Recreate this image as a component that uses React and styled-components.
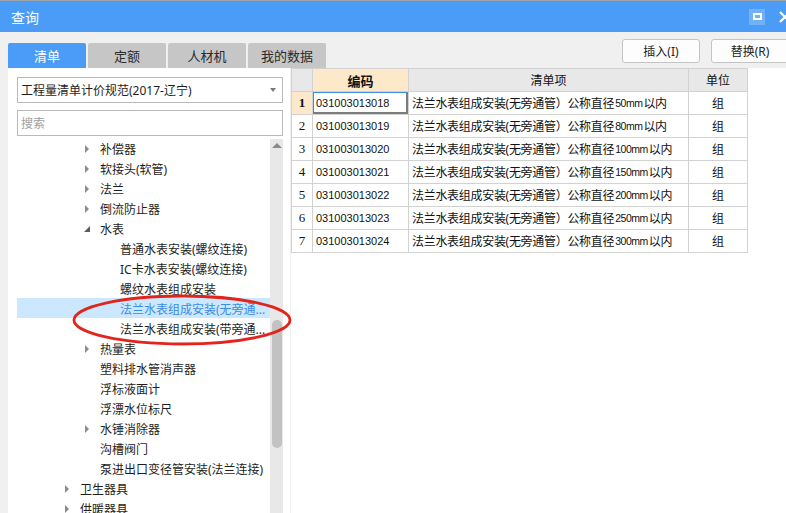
import React from 'react';
import styled, { createGlobalStyle } from 'styled-components';

const GlobalStyle = createGlobalStyle`
    html, body {
        margin: 0;
        padding: 0;
        background: #f0f0f0;
        overflow: hidden;
    }
    body {
        font-family: "Noto Sans", "Noto Sans CJK SC", sans-serif;
        color: #1e1e1e;
    }
`

const Window = styled.div`
    position: relative;
    width: 786px;
    height: 513px;
    display: flex;
    flex-direction: column;
    background: #f0f0f0;
    overflow: hidden;
`

const TitleBar = styled.div`
    flex: none;
    height: 32px;
    box-sizing: border-box;
    border-top: 1px solid #9ba3ab;
    background: #4a9cf7;
    display: flex;
    align-items: center;
    padding-left: 11px;
    color: #fff;
    font-size: 14px;
`

const WinControls = styled.div`
    margin-left: auto;
    margin-right: -6px;
    display: flex;
    align-items: center;
    gap: 13px;
`

const MaxButton = styled.div`
    width: 16px;
    height: 16px;
    background: rgba(255, 255, 255, 0.22);
    display: flex;
    align-items: center;
    justify-content: center;

    & > span {
        width: 9px;
        height: 7px;
        box-sizing: border-box;
        border: 2px solid #fff;
    }
`

const Toolbar = styled.div`
    flex: none;
    height: 36px;
    display: flex;
    align-items: flex-end;
    padding-left: 8px;
`

const Tabs = styled.div`
    display: flex;
    gap: 2px;
`

const Tab = styled.div`
    width: 78px;
    height: 25px;
    border-radius: 2px 2px 0 0;
    background: ${p => (p.$active ? '#4a9cf7' : '#c6c6c6')};
    color: ${p => (p.$active ? '#fff' : '#2a2a2a')};
    font-size: 13px;
    display: flex;
    align-items: center;
    justify-content: center;
`

const Actions = styled.div`
    margin-left: auto;
    margin-right: -3px;
    align-self: flex-start;
    margin-top: 7px;
    display: flex;
    gap: 11px;
`

const Button = styled.div`
    width: 78px;
    height: 24px;
    box-sizing: border-box;
    border: 1px solid #c4c4c4;
    border-radius: 3px;
    background: #fdfdfd;
    font-size: 12px;
    color: #222;
    display: flex;
    align-items: center;
    justify-content: center;
`

const Main = styled.div`
    flex: 1;
    min-height: 0;
    display: flex;
    gap: 1px;
    padding-left: 8px;
`

const LeftPanel = styled.div`
    width: 282px;
    flex: none;
    box-sizing: border-box;
    background: #fff;
    padding: 9px 7px 0 9px;
    display: flex;
    flex-direction: column;
`

const Field = styled.div`
    height: 26px;
    flex: none;
    box-sizing: border-box;
    border: 1px solid #b9b9b9;
    background: #fff;
    display: flex;
    align-items: center;
    padding: 0 3px 0 3px;
    font-size: 12px;
    color: ${p => (p.$placeholder ? '#a0a0a0' : '#1e1e1e')};
    margin-top: ${p => p.$gap || 0}px;
`

const Caret = styled.span`
    margin-left: auto;
    margin-right: 3px;
    width: 0;
    height: 0;
    border-left: 3px solid transparent;
    border-right: 3px solid transparent;
    border-top: 4px solid #7a7a7a;
`

const TreeWrap = styled.div`
    flex: 1;
    min-height: 0;
    margin-top: 2px;
    display: flex;
    overflow: hidden;
`

const TreeList = styled.div`
    flex: 1;
    min-width: 0;
`

const TreeRow = styled.div`
    height: 20px;
    display: flex;
    align-items: center;
    padding-left: ${p => 47 + (p.$level - 2) * 20}px;
    padding-top: 1px;
    box-sizing: border-box;
    background: ${p => (p.$selected ? '#cce8ff' : 'transparent')};
    color: ${p => (p.$selected ? '#3b8ce6' : '#1e1e1e')};
    font-size: 12px;
    white-space: nowrap;
`

const Toggle = styled.span`
    width: 16px;
    flex: none;
    display: flex;
    align-items: center;
`

const Closed = styled.span`
    width: 0;
    height: 0;
    margin-left: 1px;
    border-top: 4px solid transparent;
    border-bottom: 4px solid transparent;
    border-left: 4px solid #8c8c8c;
`

const Opened = styled.span`
    width: 0;
    height: 0;
    border-left: 6px solid transparent;
    border-bottom: 6px solid #5c5c5c;
`

const Scrollbar = styled.div`
    width: 13px;
    flex: none;
    margin-top: 1px;
    background: #e8e8e8;
    display: flex;
    flex-direction: column;
    align-items: center;
`

const ScrollUp = styled.div`
    height: 9px;
    display: flex;
    align-items: flex-end;

    & > span {
        width: 0;
        height: 0;
        border-left: 5px solid transparent;
        border-right: 5px solid transparent;
        border-bottom: 5px solid #8a8a8a;
    }
`

const Thumb = styled.div`
    width: 10px;
    height: 128px;
    margin-top: 172px;
    border-radius: 5px;
    background: #c2c2c2;
`

const RightPanel = styled.div`
    flex: 1;
    background: #fff;
`

const Grid = styled.div`
    display: grid;
    grid-template-columns: 21px 96px 280px 59px;
    grid-auto-rows: 23px;
    width: max-content;
    border-left: 1px solid #d2d2d2;
    border-top: 1px solid #d2d2d2;
`

const Cell = styled.div`
    box-sizing: border-box;
    border-right: 1px solid #d2d2d2;
    border-bottom: 1px solid #d2d2d2;
    display: flex;
    align-items: center;
    justify-content: ${p => (p.$center ? 'center' : 'flex-start')};
    padding-left: ${p => (p.$center ? 0 : 3)}px;
    background: ${p => (p.$peach ? '#fde8c9' : p.$head ? '#e8e8e8' : '#fff')};
    font-weight: ${p => (p.$bold ? 'bold' : 'normal')};
    font-size: ${p => (p.$bold ? 13 : 12)}px;
    color: #111;
    white-space: nowrap;
    overflow: hidden;
    box-shadow: ${p => (p.$focus ? 'inset 1px 1px 0 #3b8cf0, inset -2px -2px 0 #7c7c7c' : 'none')};
`

const ItemCell = styled(Cell)`
    letter-spacing: -0.3px;
`

const RowNo = styled(Cell)`
    font-family: "Liberation Serif", serif;
    font-size: 13px;
`

const Code = styled(Cell)`
    font-family: "Liberation Sans", sans-serif;
    font-size: 11px;
`

const Size = styled.span`
    font-family: "Liberation Sans", sans-serif;
    font-size: 10.5px;
    letter-spacing: -0.5px;
    margin: 0 1px;
`

const Annotation = styled.svg`
    position: absolute;
    left: 72px;
    top: 294px;
    pointer-events: none;
`

const tree = [
    { level: 3, label: '补偿器', toggle: 'closed' },
    { level: 3, label: '软接头(软管)', toggle: 'closed' },
    { level: 3, label: '法兰', toggle: 'closed' },
    { level: 3, label: '倒流防止器', toggle: 'closed' },
    { level: 3, label: '水表', toggle: 'open' },
    { level: 4, label: '普通水表安装(螺纹连接)' },
    { level: 4, label: 'IC卡水表安装(螺纹连接)' },
    { level: 4, label: '螺纹水表组成安装' },
    { level: 4, label: '法兰水表组成安装(无旁通...', selected: true },
    { level: 4, label: '法兰水表组成安装(带旁通...' },
    { level: 3, label: '热量表', toggle: 'closed' },
    { level: 3, label: '塑料排水管消声器' },
    { level: 3, label: '浮标液面计' },
    { level: 3, label: '浮漂水位标尺' },
    { level: 3, label: '水锤消除器', toggle: 'closed' },
    { level: 3, label: '沟槽阀门' },
    { level: 3, label: '泵进出口变径管安装(法兰连接)' },
    { level: 2, label: '卫生器具', toggle: 'closed' },
    { level: 2, label: '供暖器具', toggle: 'closed' },
]

const sizes = [50, 80, 100, 150, 200, 250, 300]

const App = () => {
    return (
        <Window>
            <GlobalStyle />
            <TitleBar>
                查询
                <WinControls>
                    <MaxButton><span /></MaxButton>
                    <svg width="14" height="14" viewBox="0 0 14 14">
                        <path d="M2 2 L12 12 M12 2 L2 12" stroke="#fff" strokeWidth="2.2" />
                    </svg>
                </WinControls>
            </TitleBar>
            <Toolbar>
                <Tabs>
                    <Tab $active>清单</Tab>
                    <Tab>定额</Tab>
                    <Tab>人材机</Tab>
                    <Tab>我的数据</Tab>
                </Tabs>
                <Actions>
                    <Button>插入(I)</Button>
                    <Button>替换(R)</Button>
                </Actions>
            </Toolbar>
            <Main>
                <LeftPanel>
                    <Field>
                        工程量清单计价规范(2017-辽宁)
                        <Caret />
                    </Field>
                    <Field $gap={7} $placeholder>搜索</Field>
                    <TreeWrap>
                        <TreeList>
                            {tree.map((node, i) => (
                                <TreeRow key={i} $level={node.level} $selected={node.selected}>
                                    <Toggle>
                                        {node.toggle === 'closed' && <Closed />}
                                        {node.toggle === 'open' && <Opened />}
                                    </Toggle>
                                    {node.label}
                                </TreeRow>
                            ))}
                        </TreeList>
                        <Scrollbar>
                            <ScrollUp><span /></ScrollUp>
                            <Thumb />
                        </Scrollbar>
                    </TreeWrap>
                </LeftPanel>
                <RightPanel>
                    <Grid>
                        <Cell $head />
                        <Cell $peach $bold $center>编码</Cell>
                        <Cell $head $center>清单项</Cell>
                        <Cell $head $center>单位</Cell>
                        {sizes.map((size, i) => (
                            <React.Fragment key={size}>
                                <RowNo $center $peach={i === 0} $bold={i === 0}>{i + 1}</RowNo>
                                <Code $focus={i === 0}>{`0310030130${18 + i}`}</Code>
                                <ItemCell>
                                    法兰水表组成安装(无旁通管）公称直径<Size>{size}mm</Size>以内
                                </ItemCell>
                                <Cell $center>组</Cell>
                            </React.Fragment>
                        ))}
                    </Grid>
                </RightPanel>
            </Main>
            <Annotation width="222" height="54" viewBox="0 0 222 54">
                <ellipse cx="110" cy="26" rx="108" ry="24" fill="none" stroke="#e3241c" strokeWidth="2.8" />
            </Annotation>
        </Window>
    )
}

export default App;
